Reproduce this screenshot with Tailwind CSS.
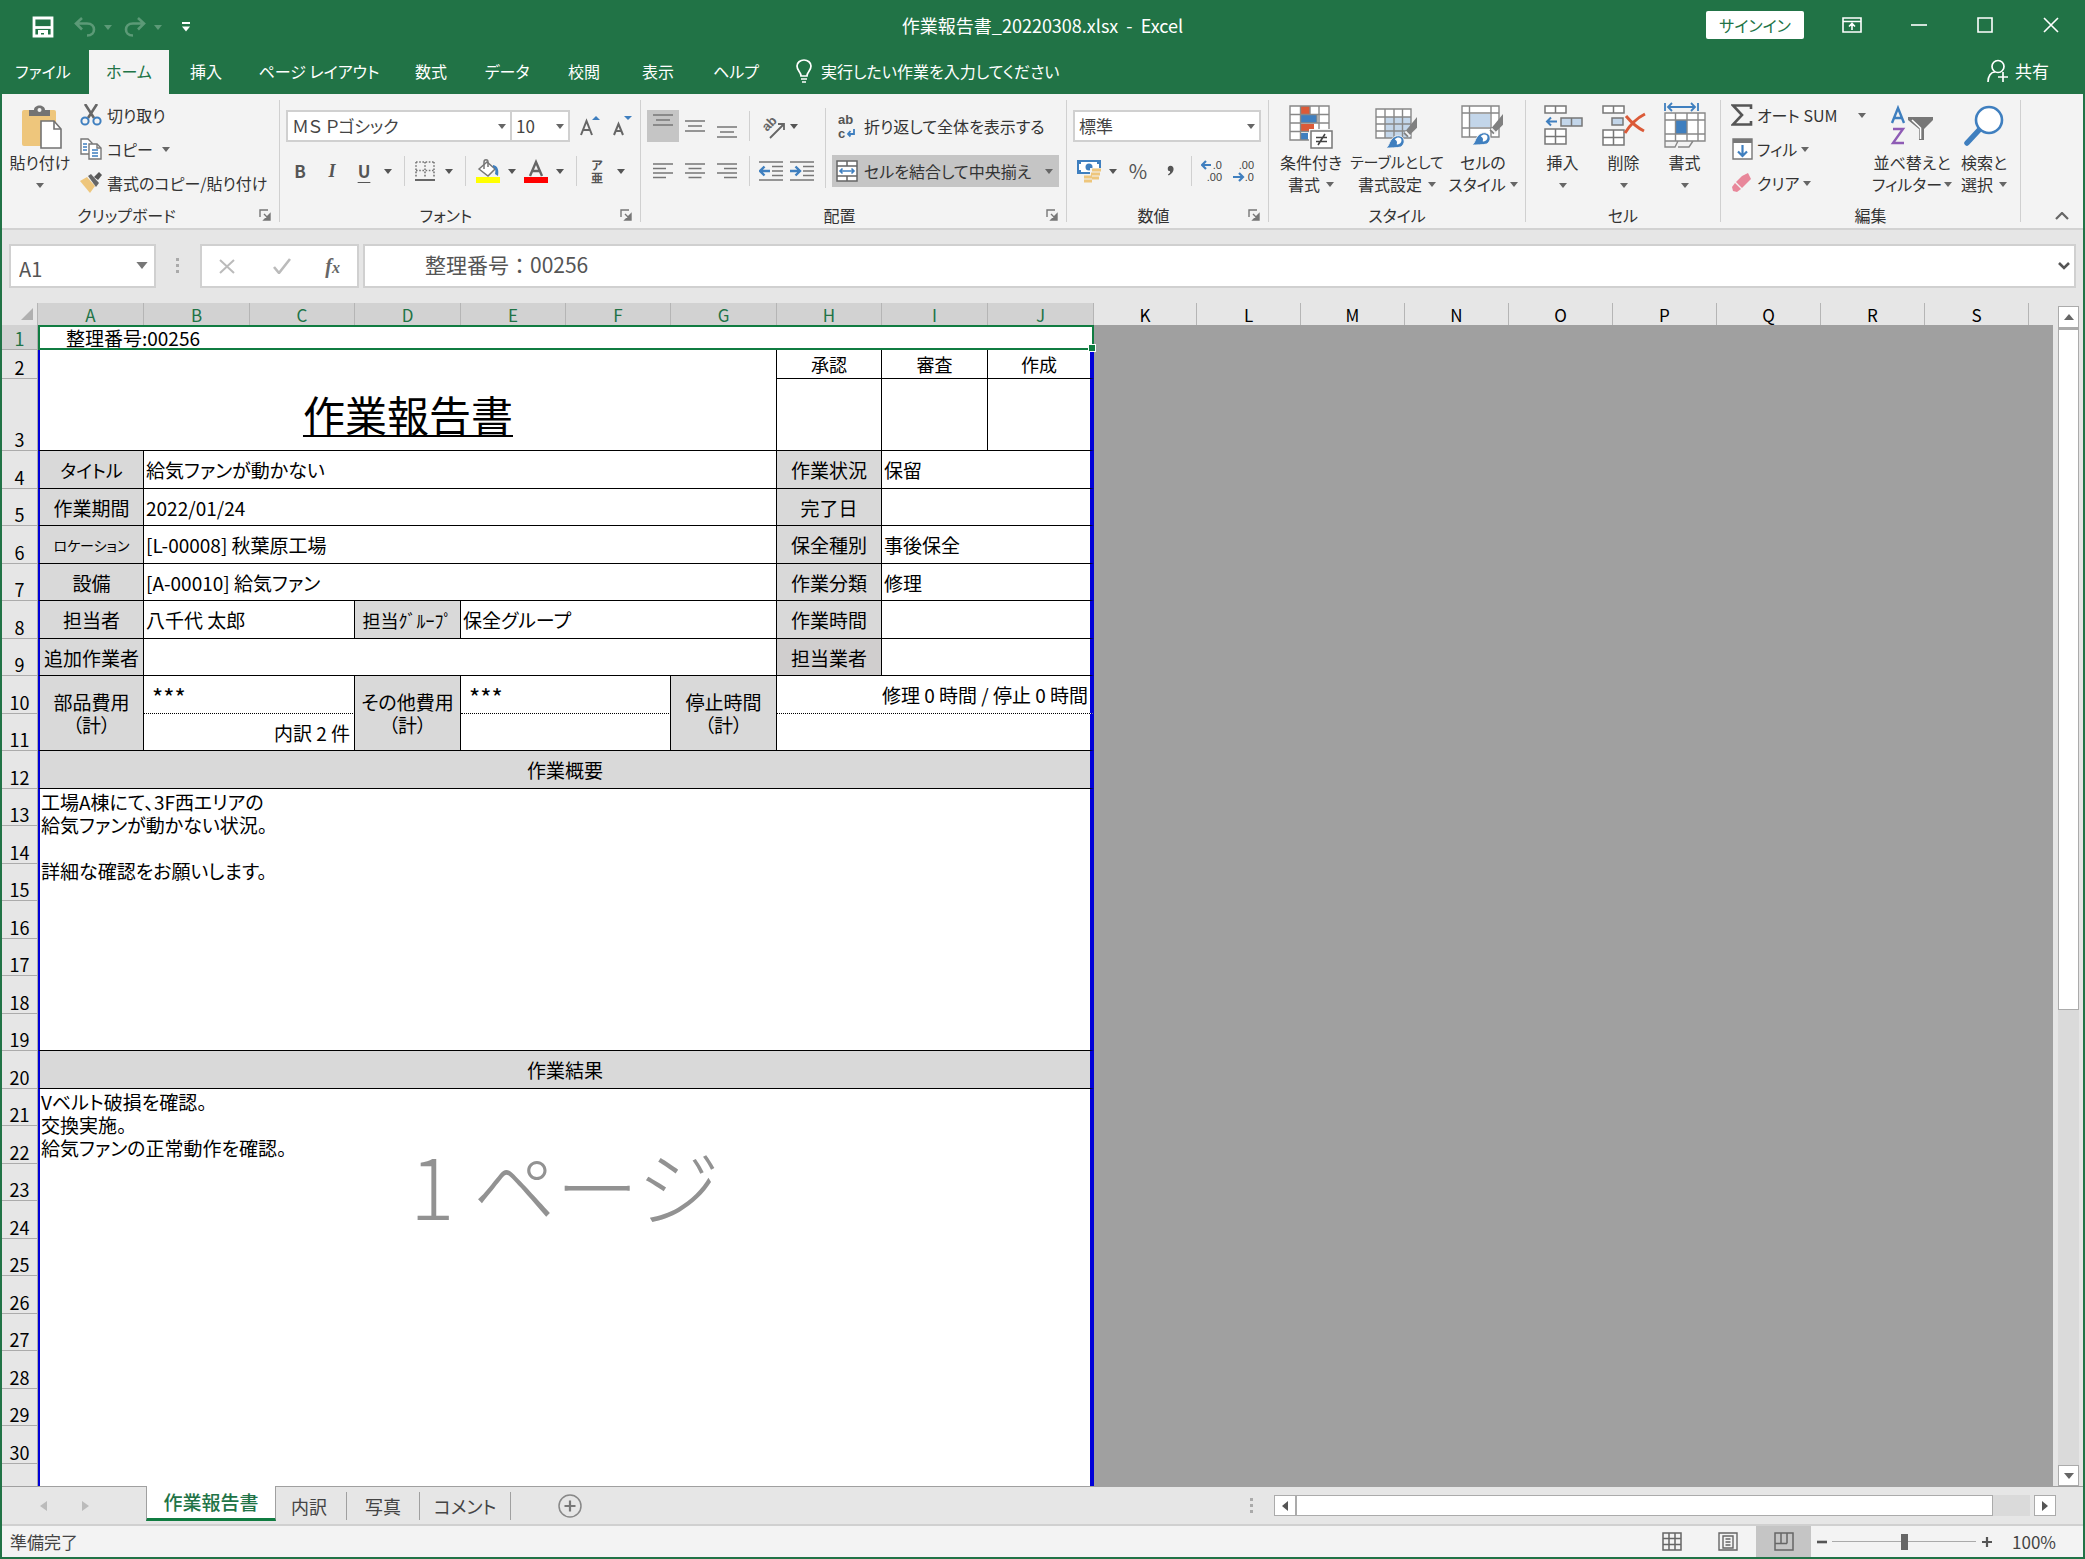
<!DOCTYPE html>
<html lang="ja">
<head>
  <meta charset="UTF-8">
  <title>作業報告書_20220308.xlsx - Excel</title>
  <!-- Tailwind for styling -->
  <script src="https://cdn.jsdelivr.net/npm/@tailwindcss/browser@4"></script>
</head>
<body class="h-screen flex flex-col overflow-hidden border-2 border-[#217346] bg-[#e6e6e6] font-['Noto_Sans_CJK_JP','Noto_Sans',sans-serif] [font-feature-settings:'palt'] text-base text-[#262626] whitespace-nowrap">

  <!-- Shared icons -->
  <svg class="hidden">
    <symbol id="dd" viewBox="0 0 8 5"><path d="M0 0h8L4 5z" fill="currentColor"/></symbol>
    <symbol id="launch" viewBox="0 0 12 12"><path d="M1 8V1h8" fill="none" stroke="#777" stroke-width="1.4"/><path d="M5 5l5 5M11 5v6H5z" stroke="#777" stroke-width="1.4" fill="#777"/></symbol>
    <symbol id="brush" viewBox="0 0 34 34"><path d="M33 1v11L23 22l-4-4z" fill="#808080"/><path d="M21 16l5 5" stroke="#f3f3f3" stroke-width="2"/><path d="M1 33c3-2 3-5 5-8 3-5 9-6 12-3s2 8-2 10c-4 1-10 1-15 1z" fill="#3f7fbf" stroke="#f3f3f3" stroke-width="1"/><path d="M10 24c3-3 7-2 7 1s-3 5-5 4c1-2 0-4-2-5z" fill="#fff"/></symbol>
  </svg>

  <!-- Title bar -->
  <header class="bg-[#217346] text-white shrink-0">
    <div class="flex h-12 items-center pb-0.5">
      <div class="flex flex-1 items-center pl-6 pt-1">
        <button class="ml-1.5" aria-label="上書き保存"><svg class="w-[22px] h-[22px]" viewBox="0 0 22 22"><path d="M2 2h18v18H2z" fill="none" stroke="#fff" stroke-width="2.800"/><path d="M2 11.500h18" stroke="#fff" stroke-width="2.800"/><path d="M6 20v-6h10v6h-4v-3H9v3z" fill="#fff"/></svg></button>
        <button class="ml-5 flex items-center gap-2 text-[#5c9a77]" aria-label="元に戻す"><svg class="w-[22px] h-5" viewBox="0 0 22 20"><path d="M8 1L2 6.500l6 6M2 6.500h11c5 0 7 3 7 6s-2 6-7 6" fill="none" stroke="currentColor" stroke-width="2.600"/></svg><svg class="w-2 h-[5px]"><use href="#dd"/></svg></button>
        <button class="ml-3 flex items-center gap-2 text-[#5c9a77]" aria-label="やり直し"><svg class="w-[22px] h-5" viewBox="0 0 22 20"><path d="M14 1l6 5.500-6 6M20 6.500H9c-5 0-7 3-7 6s2 6 7 6" fill="none" stroke="currentColor" stroke-width="2.600"/></svg><svg class="w-2 h-[5px]"><use href="#dd"/></svg></button>
        <button class="ml-5" aria-label="クイック アクセス ツール バーのユーザー設定"><svg class="w-2 h-[10px]" viewBox="0 0 8 10"><path d="M0 1h8" stroke="#fff" stroke-width="2"/><path d="M0 4.500h8L4 9.500z" fill="#fff"/></svg></button>
      </div>
      <h1 class="text-lg">作業報告書_20220308.xlsx&nbsp; -&nbsp; Excel</h1>
      <div class="flex flex-1 items-center justify-end pr-6">
        <button class="h-7 w-[98px] rounded-xs bg-white text-[#217346]">サインイン</button>
        <button class="ml-[38px]" aria-label="リボンの表示オプション"><svg class="w-5 h-4" viewBox="0 0 20 16"><path d="M1 1h18v14H1zM1 4.500h18M10 13V7M7 9.500l3-3 3 3" fill="none" stroke="#fff" stroke-width="1.600"/></svg></button>
        <button class="ml-[49px]" aria-label="最小化"><svg class="w-4 h-4" viewBox="0 0 16 16"><path d="M0 8h16" stroke="#fff" stroke-width="1.600"/></svg></button>
        <button class="ml-[50px]" aria-label="最大化"><svg class="w-4 h-4" viewBox="0 0 16 16"><path d="M1 1h14v14H1z" fill="none" stroke="#fff" stroke-width="1.600"/></svg></button>
        <button class="ml-[50px]" aria-label="閉じる"><svg class="w-4 h-4" viewBox="0 0 16 16"><path d="M1 1l14 14M15 1L1 15" stroke="#fff" stroke-width="1.600"/></svg></button>
      </div>
    </div>

    <!-- Ribbon tabs -->
    <nav class="flex h-11 [&>button]:pb-0.5">
      <button class="w-[82px]">ファイル</button>
      <button class="ml-[5px] w-20 bg-[#f3f3f3] text-[#217346]">ホーム</button>
      <button class="w-[74px]">挿入</button>
      <button class="w-[152px]">ページ レイアウト</button>
      <button class="w-[72px]">数式</button>
      <button class="w-20">データ</button>
      <button class="w-[74px]">校閲</button>
      <button class="w-[74px]">表示</button>
      <button class="w-[82px]">ヘルプ</button>
      <button class="ml-[18px] flex items-center gap-2"><svg class="w-[18px] h-6" viewBox="0 0 18 24"><path d="M6 17c0-4-4-5-4-10a7 6 0 0 1 14 0c0 5-4 6-4 10z" fill="none" stroke="#fff" stroke-width="1.700"/><path d="M6 20h6M7 23h4" stroke="#fff" stroke-width="1.700"/></svg>実行したい作業を入力してください</button>
      <button class="ml-auto mr-[34px] flex items-center gap-1.5 text-[17px]"><svg class="w-[22px] h-6" viewBox="0 0 22 24"><circle cx="11" cy="7.500" r="6" fill="none" stroke="#fff" stroke-width="1.700"/><path d="M1 23c0-6 3-10 7-10M16 13v10M11 18h10" fill="none" stroke="#fff" stroke-width="1.700"/></svg>共有</button>
    </nav>
  </header>

  <!-- Ribbon -->
  <section class="flex h-[136px] shrink-0 border-b-2 border-[#d2d2d2] bg-[#f3f3f3] leading-[22px] text-[#333]">

    <!-- Clipboard -->
    <div class="flex w-[277px] flex-col">
      <div class="flex h-[110px]">
        <button class="flex w-[76px] flex-col items-center pt-[11px]">
          <svg class="w-11 h-11" viewBox="0 0 44 44"><rect x="4" y="5" width="34" height="36" rx="2" fill="#eec67c"/><path d="M11 11V5h5c0-6 11-6 11 0h5v6z" fill="#737373"/><circle cx="21.500" cy="5" r="2" fill="#f3f3f3"/><path d="M23 16h13l7 8v19H23z" fill="#fff" stroke="#737373" stroke-width="1.600"/><path d="M36 16v8h7" fill="none" stroke="#737373" stroke-width="1.600"/></svg>
          <span class="mt-0.5">貼り付け</span>
          <svg class="mt-2.5 w-2 h-[5px] text-[#666]"><use href="#dd"/></svg>
        </button>
        <div class="flex flex-col pt-1 pl-0.5">
          <button class="flex h-[34px] items-center gap-[5px]"><svg class="w-[22px] h-[22px]" viewBox="0 0 22 22"><path d="M5 0l9 14M17 0L8 14" stroke="#666" stroke-width="2.600"/><circle cx="5" cy="17" r="3.600" fill="none" stroke="#3f7fbf" stroke-width="2"/><circle cx="17" cy="17" r="3.600" fill="none" stroke="#3f7fbf" stroke-width="2"/></svg>切り取り</button>
          <button class="flex h-[34px] items-center gap-[5px]"><svg class="w-[22px] h-[22px]" viewBox="0 0 22 22"><path d="M1 1h7l4 4v11H1z" fill="#fff" stroke="#777" stroke-width="1.400"/><path d="M3 6h4M3 9h4M3 12h4" stroke="#3f7fbf" stroke-width="1.400"/><path d="M9 6h8l4 4v11H9z" fill="#fff" stroke="#777" stroke-width="1.400"/><path d="M17 6v4h4" fill="none" stroke="#777" stroke-width="1.400"/><path d="M12 12h6M12 15h6M12 18h6" stroke="#3f7fbf" stroke-width="1.400"/></svg>コピー<svg class="ml-1 w-2 h-[5px] text-[#666]"><use href="#dd"/></svg></button>
          <button class="flex h-[34px] items-center gap-[5px]"><svg class="w-[22px] h-[22px]" viewBox="0 0 22 22"><path d="M0 9l7-4 8 9-5 7z" fill="#eec67c"/><path d="M8 4l3-2 8 9-3 4z" fill="#666"/><path d="M14 5l5-5 3 3-4 5z" fill="#555"/></svg>書式のコピー/貼り付け</button>
        </div>
      </div>
      <div class="flex items-center"><span class="flex-1 text-center">クリップボード</span><button class="flex w-7 justify-center" aria-label="クリップボードの設定"><svg class="w-3 h-3"><use href="#launch"/></svg></button></div>
    </div>
    <div class="my-1.5 w-px bg-[#d0d0d0]"></div>

    <!-- Font -->
    <div class="flex w-[360px] flex-col">
      <div class="flex h-[110px] flex-col gap-[13px] pt-4">
        <div class="flex h-8 items-center pl-1.5">
          <label class="relative"><select aria-label="フォント" class="h-8 w-[226px] appearance-none border-2 border-[#d0d0d0] bg-white pl-1 text-[17px] leading-6 text-[#444]"><option>ＭＳ Ｐゴシック</option></select><svg class="absolute right-1.5 top-3.5 w-2 h-[5px] text-[#666]"><use href="#dd"/></svg></label>
          <label class="relative"><select aria-label="フォント サイズ" class="h-8 w-[58px] appearance-none border-2 border-l-0 border-[#d0d0d0] bg-white pl-1 text-[17px] leading-6 text-[#444]"><option>10</option></select><svg class="absolute right-1.5 top-3.5 w-2 h-[5px] text-[#666]"><use href="#dd"/></svg></label>
          <button class="ml-1 flex w-8 justify-center" aria-label="フォント サイズの拡大"><svg class="w-5 h-5" viewBox="0 0 20 20"><path d="M1 19L6.500 5l5.500 14M3 14h7" fill="none" stroke="#666" stroke-width="2"/><path d="M12 4h8l-4-4z" fill="#3f7fbf"/></svg></button>
          <button class="flex w-8 justify-center" aria-label="フォント サイズの縮小"><svg class="w-5 h-5" viewBox="0 0 20 20"><path d="M2 19L6.500 8 11 19M4 15h5" fill="none" stroke="#666" stroke-width="2"/><path d="M12 0h8l-4 4z" fill="#3f7fbf"/></svg></button>
        </div>
        <div class="flex h-8 items-center pl-1 text-[#555]">
          <button class="w-8 text-[17px] font-bold">B</button>
          <button class="w-8 font-['Liberation_Serif',serif] text-lg font-bold italic">I</button>
          <button class="w-8 text-[17px] font-bold underline underline-offset-4">U</button>
          <button class="flex w-4 justify-center" aria-label="下線の種類"><svg class="w-2 h-[5px]"><use href="#dd"/></svg></button>
          <div class="ml-2 mr-1 h-[30px] w-px bg-[#d0d0d0]"></div>
          <button class="flex w-8 justify-center" aria-label="罫線"><svg class="w-5 h-5" viewBox="0 0 20 20"><path d="M1 1h18M1 9.500h18M1 1v16M10 1v16M19 1v16" fill="none" stroke="#777" stroke-width="1.600" stroke-dasharray="1.600 1.600"/><path d="M0 19h20" stroke="#666" stroke-width="2"/></svg></button>
          <button class="flex w-4 justify-center" aria-label="罫線の種類"><svg class="w-2 h-[5px]"><use href="#dd"/></svg></button>
          <div class="ml-2 mr-1 h-[30px] w-px bg-[#d0d0d0]"></div>
          <button class="flex w-9 justify-center" aria-label="塗りつぶしの色"><svg class="w-6 h-6" viewBox="0 0 24 24"><path d="M3 10l8-7 8 7-7 7z" fill="#fff" stroke="#777" stroke-width="1.500"/><path d="M8 10V3c0-3 4-3 4 0v5" fill="none" stroke="#777" stroke-width="1.500"/><path d="M17 6c5 1 6 5 5 11l-3-2c1-4 0-6-2-7z" fill="#3f7fbf"/><path d="M0 18h24v6H0z" fill="#ff0"/></svg></button>
          <button class="flex w-3 justify-center" aria-label="塗りつぶしの色の種類"><svg class="w-2 h-[5px]"><use href="#dd"/></svg></button>
          <button class="flex w-9 justify-center" aria-label="フォントの色"><svg class="w-6 h-6" viewBox="0 0 24 24"><path d="M6 17L12 3l6 14M8 12h8" fill="none" stroke="#666" stroke-width="2.400"/><path d="M0 18h24v6H0z" fill="#f00"/></svg></button>
          <button class="flex w-3 justify-center" aria-label="フォントの色の種類"><svg class="w-2 h-[5px]"><use href="#dd"/></svg></button>
          <div class="ml-2.5 mr-1 h-[30px] w-px bg-[#d0d0d0]"></div>
          <button class="flex w-8 flex-col items-center text-xs leading-[13px] font-bold" aria-label="ふりがなの表示"><span>ア</span><span>亜</span></button>
          <button class="flex w-4 justify-center" aria-label="ふりがなの設定"><svg class="w-2 h-[5px]"><use href="#dd"/></svg></button>
        </div>
      </div>
      <div class="flex items-center"><span class="flex-1 text-center">フォント</span><button class="flex w-7 justify-center" aria-label="フォントの設定"><svg class="w-3 h-3"><use href="#launch"/></svg></button></div>
    </div>
    <div class="my-1.5 w-px bg-[#d0d0d0]"></div>

    <!-- Alignment -->
    <div class="flex w-[425px] flex-col">
      <div class="flex h-[110px]">
        <div class="flex w-[184px] flex-col gap-[13px] pl-1.5 pt-4 text-[#555]">
          <div class="flex h-8 items-center">
            <button class="flex h-8 w-8 justify-center bg-[#c5c5c5] pt-1" aria-label="上揃え"><svg class="w-5 h-3" viewBox="0 0 20 12"><path d="M0 1h20M3 6h14M0 11h20" stroke="#777" stroke-width="1.600"/></svg></button>
            <button class="flex h-8 w-8 items-center justify-center" aria-label="上下中央揃え"><svg class="w-5 h-3" viewBox="0 0 20 12"><path d="M0 1h20M3 6h14M0 11h20" stroke="#777" stroke-width="1.600"/></svg></button>
            <button class="flex h-8 w-8 items-end justify-center pb-1" aria-label="下揃え"><svg class="w-5 h-3" viewBox="0 0 20 12"><path d="M0 1h20M3 6h14M0 11h20" stroke="#777" stroke-width="1.600"/></svg></button>
            <div class="mx-1.5 h-[30px] w-px bg-[#d0d0d0]"></div>
            <button class="flex w-[30px] justify-center" aria-label="方向"><svg class="w-7 h-7" viewBox="0 0 28 28"><text transform="translate(10 20) rotate(-45)" class="font-['Liberation_Sans',sans-serif] text-[13px] font-bold" fill="#666">ab</text><path d="M13 26L27 12M21 12h6v6" fill="none" stroke="#666" stroke-width="1.800"/></svg></button>
            <button class="flex w-4 justify-center" aria-label="方向の種類"><svg class="w-2 h-[5px]"><use href="#dd"/></svg></button>
          </div>
          <div class="flex h-8 items-center">
            <button class="flex w-8 justify-center" aria-label="左揃え"><svg class="w-5 h-4" viewBox="0 0 20 16"><path d="M0 1h20M0 5.500h13M0 10h20M0 14.500h13" stroke="#777" stroke-width="1.600"/></svg></button>
            <button class="flex w-8 justify-center" aria-label="中央揃え"><svg class="w-5 h-4" viewBox="0 0 20 16"><path d="M0 1h20M3.500 5.500h13M0 10h20M3.500 14.500h13" stroke="#777" stroke-width="1.600"/></svg></button>
            <button class="flex w-8 justify-center" aria-label="右揃え"><svg class="w-5 h-4" viewBox="0 0 20 16"><path d="M0 1h20M7 5.500h13M0 10h20M7 14.500h13" stroke="#777" stroke-width="1.600"/></svg></button>
            <div class="mx-1.5 h-[30px] w-px bg-[#d0d0d0]"></div>
            <button class="flex w-[30px] justify-center" aria-label="インデントを減らす"><svg class="w-6 h-5" viewBox="0 0 24 20"><path d="M0 1h24M13 5.500h11M13 10h11M13 14.500h11M0 19h24" stroke="#777" stroke-width="1.600"/><path d="M1 10h10M5.500 5.500L1 10l4.500 4.500" fill="none" stroke="#3f7fbf" stroke-width="2.400"/></svg></button>
            <button class="flex w-8 justify-center" aria-label="インデントを増やす"><svg class="w-6 h-5" viewBox="0 0 24 20"><path d="M0 1h24M13 5.500h11M13 10h11M13 14.500h11M0 19h24" stroke="#777" stroke-width="1.600"/><path d="M0 10h10M5.500 5.500L10 10l-4.500 4.500" fill="none" stroke="#3f7fbf" stroke-width="2.400"/></svg></button>
          </div>
        </div>
        <div class="mt-3.5 h-20 w-px bg-[#d0d0d0]"></div>
        <div class="flex flex-col gap-[13px] pl-1.5 pt-4">
          <button class="flex h-8 items-center gap-2 pl-1.5"><svg class="w-[18px] h-7" viewBox="0 0 18 28"><text x="0" y="12" class="font-['Liberation_Sans',sans-serif] text-[13px] font-bold" fill="#555">ab</text><text x="0" y="26" class="font-['Liberation_Sans',sans-serif] text-[13px] font-bold" fill="#555">c</text><path d="M16 17v5h-6M12.500 19L10 22l2.500 2.500" fill="none" stroke="#3f7fbf" stroke-width="1.800"/></svg>折り返して全体を表示する</button>
          <button class="flex h-8 w-[227px] items-center bg-[#c5c5c5] pl-1"><svg class="mr-1.5 w-[22px] h-[22px]" viewBox="0 0 22 22"><path d="M1 1h20v20H1zM1 6h20M1 16h20M11 1v5M11 16v5" fill="#fff" stroke="#666" stroke-width="1.500"/><path d="M4 11h14M6.500 8.500L4 11l2.500 2.500M15.500 8.500L18 11l-2.500 2.500" fill="none" stroke="#3f7fbf" stroke-width="1.600"/></svg>セルを結合して中央揃え<svg class="ml-auto mr-1.5 w-2 h-[5px] text-[#666]"><use href="#dd"/></svg></button>
        </div>
      </div>
      <div class="flex items-center"><span class="flex-1 text-center">配置</span><button class="flex w-7 justify-center" aria-label="配置の設定"><svg class="w-3 h-3"><use href="#launch"/></svg></button></div>
    </div>
    <div class="my-1.5 w-px bg-[#d0d0d0]"></div>

    <!-- Number -->
    <div class="flex w-[201px] flex-col">
      <div class="flex h-[110px] flex-col gap-[13px] pl-1.5 pt-4 text-[#555]">
        <label class="relative h-8 w-[188px]"><select aria-label="数値の書式" class="h-8 w-full appearance-none border-2 border-[#d0d0d0] bg-white pl-1 text-[17px] leading-6 text-[#444]"><option>標準</option></select><svg class="absolute right-1.5 top-3.5 w-2 h-[5px] text-[#666]"><use href="#dd"/></svg></label>
        <div class="flex h-8 items-center">
          <button class="flex w-8 justify-center" aria-label="通貨表示形式"><svg class="w-6 h-6" viewBox="0 0 24 24"><path d="M1 2h22v12H1z" fill="#fff" stroke="#3f7fbf" stroke-width="2"/><circle cx="12" cy="8" r="3.500" fill="#3f7fbf"/><path d="M1 2h3v3H1zM20 2h3v3h-3zM1 11h3v3H1z" fill="#3f7fbf"/><path d="M13 9h11v12H13z" fill="#f3f3f3"/><path d="M15 11h9M14 15h9M15 19h7M7 18h8M7 22h8" stroke="#eec67c" stroke-width="3"/></svg></button>
          <button class="flex w-4 justify-center" aria-label="通貨の種類"><svg class="w-2 h-[5px]"><use href="#dd"/></svg></button>
          <button class="w-[34px] text-xl">%</button>
          <button class="flex w-[30px] justify-center" aria-label="桁区切りスタイル"><svg class="w-[7px] h-3" viewBox="0 0 8 12"><path d="M4 0c5 0 5 8-2 11l-1-1c3-2 3-3 2-4C0 6 0 0 4 0z" fill="#555"/></svg></button>
          <div class="ml-1.5 mr-1 h-[30px] w-px bg-[#d0d0d0]"></div>
          <button class="flex w-8 justify-center" aria-label="小数点以下の表示桁数を増やす"><svg class="w-[22px] h-6" viewBox="0 0 22 24"><path d="M1 6h9M5 2L1 6l4 4" fill="none" stroke="#3f7fbf" stroke-width="2.200"/><text x="21" y="10" text-anchor="end" class="font-['Liberation_Sans',sans-serif] text-[11px]" fill="#444">.0</text><text x="21" y="22" text-anchor="end" class="font-['Liberation_Sans',sans-serif] text-[11px]" fill="#444">.00</text></svg></button>
          <button class="flex w-8 justify-center" aria-label="小数点以下の表示桁数を減らす"><svg class="w-[22px] h-6" viewBox="0 0 22 24"><path d="M0 18h10M6 14l4 4-4 4" fill="none" stroke="#3f7fbf" stroke-width="2.200"/><text x="21" y="10" text-anchor="end" class="font-['Liberation_Sans',sans-serif] text-[11px]" fill="#444">.00</text><text x="21" y="22" text-anchor="end" class="font-['Liberation_Sans',sans-serif] text-[11px]" fill="#444">.0</text></svg></button>
        </div>
      </div>
      <div class="flex items-center"><span class="flex-1 text-center">数値</span><button class="flex w-7 justify-center" aria-label="表示形式の設定"><svg class="w-3 h-3"><use href="#launch"/></svg></button></div>
    </div>
    <div class="my-1.5 w-px bg-[#d0d0d0]"></div>

    <!-- Styles -->
    <div class="flex w-[256px] flex-col">
      <div class="flex h-[110px] pl-0.5">
        <button class="flex w-20 flex-col items-center pt-[11px]">
          <svg class="w-11 h-11" viewBox="0 0 44 44"><path d="M1 1h39v34H1z" fill="#fff"/><path d="M12 1h9v8h-9zM12 19h13v8H12z" fill="#db5a38"/><path d="M12 10h16v8H12zM12 28h7v7h-7z" fill="#3f7fbf"/><path d="M1 1h39v34H1zM1 9.500h39M1 18h39M1 26.500h39M11.500 1v34M30 1v34M21 1v8M28 10v8" fill="none" stroke="#888" stroke-width="1.400"/><path d="M20 24h24v20H20z" fill="#f3f3f3"/><path d="M22 26h21v17H22z" fill="#fff" stroke="#777" stroke-width="1.500"/><path d="M27 32.500h11M27 36.500h11M36 29l-7 11" stroke="#444" stroke-width="1.600"/></svg>
          <span class="mt-0.5">条件付き</span>
          <span class="flex items-center gap-1.5">書式<svg class="w-2 h-[5px] text-[#666]"><use href="#dd"/></svg></span>
        </button>
        <button class="flex w-[92px] flex-col items-center pt-[11px]">
          <svg class="w-11 h-11" viewBox="0 0 44 44"><path d="M1 4h35v29H1z" fill="#fff"/><path d="M10 12h26v21H10z" fill="#c3d6ea"/><path d="M1 4h35v29H1zM1 12h35M1 19h35M1 26h35M10 4v29M19 4v29M27.500 4v29" fill="none" stroke="#888" stroke-width="1.400"/><use href="#brush" x="10" y="11" width="33" height="33"/></svg>
          <span class="mt-0.5 text-[15px]">テーブルとして</span>
          <span class="flex items-center gap-1.5">書式設定<svg class="w-2 h-[5px] text-[#666]"><use href="#dd"/></svg></span>
        </button>
        <button class="flex w-20 flex-col items-center pt-[11px]">
          <svg class="w-11 h-11" viewBox="0 0 44 44"><path d="M1 1h37v31H1z" fill="#fff"/><path d="M9 9h20v13H9z" fill="#c3d6ea"/><path d="M1 1h37v31H1zM1 8h37M1 23h37M8.500 1v31M30 1v31" fill="none" stroke="#888" stroke-width="1.400"/><use href="#brush" x="10" y="8" width="33" height="33"/></svg>
          <span class="mt-0.5">セルの</span>
          <span class="flex items-center gap-1">スタイル<svg class="w-2 h-[5px] text-[#666]"><use href="#dd"/></svg></span>
        </button>
      </div>
      <div class="text-center">スタイル</div>
    </div>
    <div class="my-1.5 w-px bg-[#d0d0d0]"></div>

    <!-- Cells -->
    <div class="flex w-[194px] flex-col">
      <div class="flex h-[110px] pl-1.5">
        <button class="flex w-[61px] flex-col items-center pt-[11px]">
          <svg class="w-10 h-11" viewBox="0 0 40 44"><path d="M2 1h21v7H2zM12.500 1v7M2 24h21v15H2zM2 31.500h21M12.500 24v15" fill="#fff" stroke="#777" stroke-width="1.500"/><path d="M18 13h21v8H18zM28.500 13v8" fill="#c3d6ea" stroke="#777" stroke-width="1.500"/><path d="M4 16.500h10M8 12.500l-4 4 4 4" fill="none" stroke="#3f7fbf" stroke-width="2"/></svg>
          <span class="mt-0.5">挿入</span>
          <svg class="mt-2.5 w-2 h-[5px] text-[#666]"><use href="#dd"/></svg>
        </button>
        <button class="flex w-[61px] flex-col items-center pt-[11px]">
          <svg class="w-11 h-11" viewBox="0 0 44 44"><path d="M1 1h21v7H1zM11.500 1v7M1 25h21v15H1zM1 32.500h21M11.500 25v15" fill="#fff" stroke="#777" stroke-width="1.500"/><path d="M10 13h11v7H10z" fill="#c3d6ea" stroke="#777" stroke-width="1.500"/><path d="M24 11c5 6 12 12 18 15M43 9c-8 4-15 11-20 19" fill="none" stroke="#db5a38" stroke-width="3"/></svg>
          <span class="mt-0.5">削除</span>
          <svg class="mt-2.5 w-2 h-[5px] text-[#666]"><use href="#dd"/></svg>
        </button>
        <button class="flex w-[61px] flex-col items-center pt-2">
          <svg class="w-[42px] h-[47px]" viewBox="0 0 42 47"><path d="M1 1v8M34 1v8M4 5h27M8 1L4 5l4 4M27 1l4 4-4 4" fill="none" stroke="#3f7fbf" stroke-width="1.800"/><path d="M1 11h40v28H1z" fill="#fff"/><path d="M12 18h11v14H12z" fill="#3f7fbf"/><path d="M1 11h40v28H1zM1 18h40M1 32h40M11.500 11v28M23 11v28M34 11v28M1 39v6h10l3-6M14 45h11l4-6" fill="none" stroke="#888" stroke-width="1.400"/></svg>
          <span class="mt-0.5">書式</span>
          <svg class="mt-2.5 w-2 h-[5px] text-[#666]"><use href="#dd"/></svg>
        </button>
      </div>
      <div class="text-center">セル</div>
    </div>
    <div class="my-1.5 w-px bg-[#d0d0d0]"></div>

    <!-- Editing -->
    <div class="flex w-[299px] flex-col">
      <div class="flex h-[110px] pl-2.5">
        <div class="flex w-[141px] flex-col pt-1">
          <button class="flex h-[34px] items-center gap-1"><svg class="w-[22px] h-[22px]" viewBox="0 0 22 22"><path d="M20 5V1.500H2L11 11l-9 9.500h18V17" fill="none" stroke="#555" stroke-width="2.600"/></svg>オート SUM<svg class="ml-auto mr-1.5 w-2 h-[5px] text-[#666]"><use href="#dd"/></svg></button>
          <button class="flex h-[34px] items-center gap-1"><svg class="w-[22px] h-[22px]" viewBox="0 0 22 22"><path d="M2 1h19v20H2z" fill="#fff" stroke="#777" stroke-width="1.400"/><path d="M2 1h19v4H2z" fill="#777"/><path d="M11.500 7v11M7 13.500l4.500 4.500 4.500-4.500" fill="none" stroke="#3f7fbf" stroke-width="2.200"/></svg>フィル<svg class="w-2 h-[5px] text-[#666]"><use href="#dd"/></svg></button>
          <button class="flex h-[34px] items-center gap-1"><svg class="w-[22px] h-[22px]" viewBox="0 0 22 22"><path d="M11 4l6-3 3 6-9 9-6-6z" fill="#e8879a"/><path d="M4 11l6 6-4 3-4-1-1-4z" fill="#e8879a"/></svg>クリア<svg class="w-2 h-[5px] text-[#666]"><use href="#dd"/></svg></button>
        </div>
        <button class="flex w-20 flex-col items-center pt-[11px]">
          <svg class="w-11 h-11" viewBox="0 0 44 44"><path d="M2 18L8 3l6 15M4 13h8" fill="none" stroke="#3f7fbf" stroke-width="2.400"/><path d="M3 24h10L3 38h11" fill="none" stroke="#8e5bb5" stroke-width="2.400"/><path d="M18 12h25v3l-9 9v11h-5V24l-11-9z" fill="#777"/><path d="M22 15l8.500 8v11" fill="none" stroke="#fff" stroke-width="1.600"/></svg>
          <span class="mt-0.5">並べ替えと</span>
          <span class="flex items-center gap-0.5">フィルター<svg class="w-2 h-[5px] text-[#666]"><use href="#dd"/></svg></span>
        </button>
        <button class="flex w-16 flex-col items-center pt-[11px]">
          <svg class="w-10 h-11" viewBox="0 0 40 44"><path d="M16 24L3 38" stroke="#3f7fbf" stroke-width="5.500" stroke-linecap="round"/><circle cx="25" cy="15" r="13" fill="#fff" stroke="#3f7fbf" stroke-width="2.600"/></svg>
          <span class="mt-0.5">検索と</span>
          <span class="flex items-center gap-1.5">選択<svg class="w-2 h-[5px] text-[#666]"><use href="#dd"/></svg></span>
        </button>
      </div>
      <div class="text-center">編集</div>
    </div>
    <div class="my-1.5 w-px bg-[#d0d0d0]"></div>
    <button class="ml-auto mr-3.5 self-end pb-2" aria-label="リボンを折りたたむ"><svg class="w-3.5 h-2" viewBox="0 0 14 8"><path d="M1 7l6-6 6 6" fill="none" stroke="#666" stroke-width="2.200"/></svg></button>
  </section>

  <!-- Formula bar -->
  <section class="flex h-[73px] shrink-0 pl-[7px] pr-[7px] pt-3.5 text-[#555]">
    <label class="relative h-11">
      <input aria-label="名前ボックス" value="A1" class="h-11 w-[147px] border-2 border-[#d0d0d0] bg-white pl-2 pt-1 text-xl">
      <svg class="absolute right-2 top-[18px] h-[7px] w-3 text-[#777]"><use href="#dd"/></svg>
    </label>
    <svg class="mx-5 mt-3.5 h-4 w-1" viewBox="0 0 4 16"><path d="M0 0h3v3H0zM0 6h3v3H0zM0 12h3v3H0z" fill="#aaa"/></svg>
    <div class="flex h-11 w-[159px] items-center justify-between border-2 border-[#d0d0d0] bg-white px-[17px]">
      <button aria-label="キャンセル"><svg class="w-4 h-4" viewBox="0 0 16 16"><path d="M1 2l14 13M15 2L1 15" stroke="#bbb" stroke-width="2"/></svg></button>
      <button class="ml-1" aria-label="入力"><svg class="w-[18px] h-4" viewBox="0 0 18 16"><path d="M1 9l5 6L17 1" fill="none" stroke="#bbb" stroke-width="2.600"/></svg></button>
      <button aria-label="関数の挿入" class="font-['Liberation_Serif',serif] text-xl font-bold italic text-[#666]">f<span class="text-base">x</span></button>
    </div>
    <label class="relative ml-1 h-11 flex-1">
      <input aria-label="数式バー" value="整理番号：00256" class="h-11 w-full border-2 border-[#d0d0d0] bg-white pl-[60px] pb-1 text-[21px] [font-feature-settings:normal]">
      <svg class="absolute right-1.5 top-[18px] h-2 w-3" viewBox="0 0 12 8"><path d="M1 1l5 5 5-5" fill="none" stroke="#555" stroke-width="2.600"/></svg>
    </label>
  </section>

  <!-- Sheet -->
  <main class="flex min-h-0 flex-1">
    <div class="flex-1 overflow-hidden">
      <table class="w-full table-fixed border-separate border-spacing-0 text-[19px] leading-[23px] text-black">
        <colgroup>
          <col class="w-9">
          <col class="w-[106px]"><col class="w-[106px]"><col class="w-[105px]"><col class="w-[106px]"><col class="w-[105px]">
          <col class="w-[105px]"><col class="w-[106px]"><col class="w-[105px]"><col class="w-[106px]"><col class="w-[106px]">
          <col class="w-[103px]"><col class="w-[104px]"><col class="w-[104px]"><col class="w-[104px]"><col class="w-[104px]">
          <col class="w-[104px]"><col class="w-[104px]"><col class="w-[104px]"><col class="w-[104px]"><col>
        </colgroup>
        <thead class="text-[17px] leading-[21px] [&_th]:font-normal [&_th]:border-r [&_th]:border-[#b5b5b5]">
          <tr class="h-[22px]">
            <th aria-label="すべて選択"><svg class="ml-auto mr-1 h-3 w-3" viewBox="0 0 12 12"><path d="M12 0v12H0z" fill="#b0b0b0"/></svg></th>
            <th class="bg-[#d2d2d2] text-[#217346]">A</th><th class="bg-[#d2d2d2] text-[#217346]">B</th><th class="bg-[#d2d2d2] text-[#217346]">C</th><th class="bg-[#d2d2d2] text-[#217346]">D</th><th class="bg-[#d2d2d2] text-[#217346]">E</th>
            <th class="bg-[#d2d2d2] text-[#217346]">F</th><th class="bg-[#d2d2d2] text-[#217346]">G</th><th class="bg-[#d2d2d2] text-[#217346]">H</th><th class="bg-[#d2d2d2] text-[#217346]">I</th><th class="bg-[#d2d2d2] text-[#217346]">J</th>
            <th>K</th><th>L</th><th>M</th><th>N</th><th>O</th><th>P</th><th>Q</th><th>R</th><th>S</th><td></td>
          </tr>
        </thead>
        <tbody class="[&_th]:border-b [&_th]:border-r [&_th]:border-[#ababab] [&_th]:align-bottom [&_th]:text-lg [&_th]:leading-[22px] [&_th]:font-normal [&_td]:border-black">
          <tr class="h-[25px]">
            <th class="bg-[#d2d2d2] text-[#217346]">1</th>
            <td colspan="10" class="relative border-2 border-[#107c41]! bg-white pl-[26px] leading-5">整理番号:00256<span class="absolute -bottom-1 -right-1 h-2 w-2 border border-white bg-[#107c41]"></span></td>
            <td colspan="10" rowspan="31" class="bg-[#a0a0a0]"></td>
          </tr>
          <tr class="h-[29px]">
            <th>2</th>
            <td colspan="7" rowspan="2" class="border-b border-r border-l-2 border-l-[#0000d8]! bg-white pb-[11px] text-center align-bottom text-[42px] leading-[50px] underline decoration-2 underline-offset-3">作業報告書</td>
            <td class="border-b border-r bg-white text-center text-lg">承認</td>
            <td class="border-b border-r bg-white text-center text-lg">審査</td>
            <td class="border-b border-r-4 border-r-[#0000d8]! bg-white text-center text-lg">作成</td>
          </tr>
          <tr class="h-[72px]">
            <th>3</th>
            <td class="border-b border-r bg-white"></td>
            <td class="border-b border-r bg-white"></td>
            <td class="border-b border-r-4 border-r-[#0000d8]! bg-white"></td>
          </tr>
          <tr class="h-[38px]">
            <th>4</th>
            <td class="border-b border-r border-l-2 border-l-[#0000d8]! bg-[#d9d9d9] text-center text-lg">タイトル</td>
            <td colspan="6" class="border-b border-r bg-white px-0.5">給気ファンが動かない</td>
            <td class="border-b border-r bg-[#d9d9d9] text-center">作業状況</td>
            <td colspan="2" class="border-b border-r-4 border-r-[#0000d8]! bg-white px-0.5">保留</td>
          </tr>
          <tr class="h-[37px]">
            <th>5</th>
            <td class="border-b border-r border-l-2 border-l-[#0000d8]! bg-[#d9d9d9] text-center">作業期間</td>
            <td colspan="6" class="border-b border-r bg-white px-0.5">2022/01/24</td>
            <td class="border-b border-r bg-[#d9d9d9] text-center">完了日</td>
            <td colspan="2" class="border-b border-r-4 border-r-[#0000d8]! bg-white px-0.5"></td>
          </tr>
          <tr class="h-[38px]">
            <th>6</th>
            <td class="border-b border-r border-l-2 border-l-[#0000d8]! bg-[#d9d9d9] text-center text-sm">ロケーション</td>
            <td colspan="6" class="border-b border-r bg-white px-0.5">[L-00008] 秋葉原工場</td>
            <td class="border-b border-r bg-[#d9d9d9] text-center">保全種別</td>
            <td colspan="2" class="border-b border-r-4 border-r-[#0000d8]! bg-white px-0.5">事後保全</td>
          </tr>
          <tr class="h-[37px]">
            <th>7</th>
            <td class="border-b border-r border-l-2 border-l-[#0000d8]! bg-[#d9d9d9] text-center">設備</td>
            <td colspan="6" class="border-b border-r bg-white px-0.5">[A-00010] 給気ファン</td>
            <td class="border-b border-r bg-[#d9d9d9] text-center">作業分類</td>
            <td colspan="2" class="border-b border-r-4 border-r-[#0000d8]! bg-white px-0.5">修理</td>
          </tr>
          <tr class="h-[38px]">
            <th>8</th>
            <td class="border-b border-r border-l-2 border-l-[#0000d8]! bg-[#d9d9d9] text-center">担当者</td>
            <td colspan="2" class="border-b border-r bg-white px-0.5">八千代 太郎</td>
            <td class="border-b border-r bg-[#d9d9d9] text-center text-lg">担当ｸﾞﾙｰﾌﾟ</td>
            <td colspan="3" class="border-b border-r bg-white px-0.5">保全グループ</td>
            <td class="border-b border-r bg-[#d9d9d9] text-center">作業時間</td>
            <td colspan="2" class="border-b border-r-4 border-r-[#0000d8]! bg-white px-0.5"></td>
          </tr>
          <tr class="h-[37px]">
            <th>9</th>
            <td class="border-b border-r border-l-2 border-l-[#0000d8]! bg-[#d9d9d9] text-center">追加作業者</td>
            <td colspan="6" class="border-b border-r bg-white px-0.5"></td>
            <td class="border-b border-r bg-[#d0cece] text-center">担当業者</td>
            <td colspan="2" class="border-b border-r-4 border-r-[#0000d8]! bg-white px-0.5"></td>
          </tr>
          <tr class="h-[38px]">
            <th>10</th>
            <td rowspan="2" class="border-b border-r border-l-2 border-l-[#0000d8]! bg-[#d9d9d9] text-center">部品費用<br>（計）</td>
            <td colspan="2" class="border-r border-b [border-bottom-style:dotted] bg-white px-2 pt-1 text-2xl leading-6">***</td>
            <td rowspan="2" class="border-b border-r bg-[#d9d9d9] text-center">その他費用<br>（計）</td>
            <td colspan="2" class="border-r border-b [border-bottom-style:dotted] bg-white px-2 pt-1 text-2xl leading-6">***</td>
            <td rowspan="2" class="border-b border-r bg-[#d9d9d9] text-center">停止時間<br>（計）</td>
            <td colspan="3" class="border-r-4 border-r-[#0000d8]! border-b [border-bottom-style:dotted] bg-white px-0.5 text-right">修理 0 時間 / 停止 0 時間</td>
          </tr>
          <tr class="h-[37px]">
            <th>11</th>
            <td colspan="2" class="border-b border-r bg-white px-1 text-right">内訳 2 件</td>
            <td colspan="2" class="border-b border-r bg-white"></td>
            <td colspan="3" class="border-b border-r-4 border-r-[#0000d8]! bg-white"></td>
          </tr>
          <tr class="h-[38px]">
            <th>12</th>
            <td colspan="10" class="border-b border-l-2 border-l-[#0000d8]! border-r-4 border-r-[#0000d8]! bg-[#d9d9d9] text-center">作業概要</td>
          </tr>
          <tr class="h-[37px]">
            <th>13</th>
            <td colspan="10" rowspan="7" class="border-b border-l-2 border-l-[#0000d8]! border-r-4 border-r-[#0000d8]! bg-white pl-px pt-px align-top">工場A棟にて、3F西エリアの<br>給気ファンが動かない状況。<br><br>詳細な確認をお願いします。</td>
          </tr>
          <tr class="h-[38px]"><th>14</th></tr>
          <tr class="h-[37px]"><th>15</th></tr>
          <tr class="h-[38px]"><th>16</th></tr>
          <tr class="h-[37px]"><th>17</th></tr>
          <tr class="h-[38px]"><th>18</th></tr>
          <tr class="h-[37px]"><th>19</th></tr>
          <tr class="h-[38px]">
            <th>20</th>
            <td colspan="10" class="border-b border-l-2 border-l-[#0000d8]! border-r-4 border-r-[#0000d8]! bg-[#d9d9d9] text-center">作業結果</td>
          </tr>
          <tr class="h-[37px]">
            <th>21</th>
            <td colspan="10" rowspan="11" class="relative border-l-2 border-l-[#0000d8]! border-r-4 border-r-[#0000d8]! bg-white pl-px pt-px align-top">Vベルト破損を確認。<br>交換実施。<br>給気ファンの正常動作を確認。
              <!-- Page number watermark -->
              <div class="absolute inset-x-0 top-[47px] text-center text-[83px] leading-[96px] font-light text-[#929292] [font-feature-settings:normal]">1 ページ</div>
            </td>
          </tr>
          <tr class="h-[38px]"><th>22</th></tr>
          <tr class="h-[37px]"><th>23</th></tr>
          <tr class="h-[38px]"><th>24</th></tr>
          <tr class="h-[37px]"><th>25</th></tr>
          <tr class="h-[38px]"><th>26</th></tr>
          <tr class="h-[37px]"><th>27</th></tr>
          <tr class="h-[38px]"><th>28</th></tr>
          <tr class="h-[37px]"><th>29</th></tr>
          <tr class="h-[38px]"><th>30</th></tr>
          <tr class="h-12"><th>31</th></tr>
        </tbody>
      </table>
    </div>

    <!-- Vertical scrollbar -->
    <div class="flex w-[30px] flex-col pl-[5px] pr-1 pt-[3px]">
      <button class="flex h-[22px] shrink-0 items-center justify-center border border-[#ababab] bg-white text-[#666]" aria-label="上へ"><svg class="h-1.5 w-2.5" viewBox="0 0 10 6"><path d="M5 0l5 6H0z" fill="currentColor"/></svg></button>
      <div class="flex-1 bg-[#dadada]"><div class="h-3/5 border border-t-2 border-[#ababab] bg-white"></div></div>
      <button class="flex h-[21px] shrink-0 items-center justify-center border border-[#ababab] bg-white text-[#666]" aria-label="下へ"><svg class="h-1.5 w-2.5" viewBox="0 0 10 6"><path d="M0 0h10L5 6z" fill="currentColor"/></svg></button>
    </div>
  </main>

  <!-- Sheet tabs -->
  <nav class="flex h-10 shrink-0 border-b-2 border-[#d0d0d0] text-lg text-[#444]">
    <div class="flex w-36 items-center gap-[35px] border-t border-[#a0a0a0] pl-[38px]">
      <button aria-label="前のシート"><svg class="h-2.5 w-[7px]" viewBox="0 0 7 10"><path d="M7 0v10L0 5z" fill="#bbb"/></svg></button>
      <button aria-label="次のシート"><svg class="h-2.5 w-[7px]" viewBox="0 0 7 10"><path d="M0 0v10l7-5z" fill="#bbb"/></svg></button>
    </div>
    <button class="h-[35px] w-[130px] border-b-3 border-x border-x-[#a0a0a0] border-b-[#107c41] bg-white text-[19px] font-medium text-[#217346]">作業報告書</button>
    <div class="flex flex-1 items-center border-t border-[#a0a0a0]">
      <button class="h-7 w-[71px] border-r border-[#a0a0a0] pr-1 leading-6">内訳</button>
      <button class="h-7 w-[73px] border-r border-[#a0a0a0] leading-6">写真</button>
      <button class="h-7 w-[91px] border-r border-[#a0a0a0] leading-6">コメント</button>
      <button class="ml-[47px]" aria-label="新しいシート"><svg class="h-6 w-6" viewBox="0 0 24 24"><circle cx="12" cy="12" r="11" fill="none" stroke="#888" stroke-width="1.500"/><path d="M12 6.500v11M6.500 12h11" stroke="#777" stroke-width="2.200"/></svg></button>
      <svg class="ml-auto mr-5 h-4 w-1" viewBox="0 0 4 16"><path d="M0 0h3v3H0zM0 6h3v3H0zM0 12h3v3H0z" fill="#aaa"/></svg>
    </div>
    <div class="flex w-[809px] items-center border-t border-[#a0a0a0] pr-[27px]">
      <button class="flex h-[21px] w-[22px] items-center justify-center border border-[#ababab] bg-white" aria-label="左へ"><svg class="h-2.5 w-1.5" viewBox="0 0 6 10"><path d="M6 0v10L0 5z" fill="#555"/></svg></button>
      <div class="h-[21px] flex-1 bg-[#dadada]"><div class="h-full w-[95%] border border-[#ababab] bg-white"></div></div>
      <button class="ml-1 flex h-[21px] w-[22px] items-center justify-center border border-[#ababab] bg-white" aria-label="右へ"><svg class="h-2.5 w-1.5" viewBox="0 0 6 10"><path d="M0 0v10l6-5z" fill="#555"/></svg></button>
    </div>
  </nav>

  <!-- Status bar -->
  <footer class="flex h-[31px] shrink-0 items-center bg-[#f3f3f3] pl-2 pr-[27px] text-[17px] text-[#444]">
    <span>準備完了</span>
    <button class="ml-auto flex h-full w-14 items-center justify-center" aria-label="標準"><svg class="h-[19px] w-5" viewBox="0 0 20 19"><path d="M1 1h18v17H1zM1 6.500h18M1 12.500h18M7 1v17M13 1v17" fill="none" stroke="#666" stroke-width="1.500"/></svg></button>
    <button class="flex h-full w-14 items-center justify-center" aria-label="ページ レイアウト"><svg class="h-[19px] w-5" viewBox="0 0 20 19"><path d="M1 1h18v17H1zM5 4h10v12H5zM7.500 7h5M7.500 10h5M7.500 13h5" fill="none" stroke="#666" stroke-width="1.400"/></svg></button>
    <button class="flex h-full w-[55px] items-center justify-center bg-[#c5c5c5]" aria-label="改ページ プレビュー"><svg class="h-[19px] w-5" viewBox="0 0 20 19"><path d="M1 1h18v17H1zM1 11.500h12M13 1v10.500M7 1v10.500" fill="none" stroke="#666" stroke-width="1.500"/></svg></button>
    <button class="w-[21px]" aria-label="縮小"><svg class="mx-auto h-3 w-2.5" viewBox="0 0 10 12"><path d="M0 6h10" stroke="#555" stroke-width="2.600"/></svg></button>
    <input type="range" aria-label="ズーム" min="0" max="100" value="50" class="h-4 w-[144px] appearance-none bg-transparent [&::-webkit-slider-runnable-track]:h-4 [&::-webkit-slider-runnable-track]:bg-[linear-gradient(#aaa,#aaa)] [&::-webkit-slider-runnable-track]:bg-[length:100%_1px] [&::-webkit-slider-runnable-track]:bg-center [&::-webkit-slider-runnable-track]:bg-no-repeat [&::-webkit-slider-thumb]:h-4 [&::-webkit-slider-thumb]:w-[7px] [&::-webkit-slider-thumb]:appearance-none [&::-webkit-slider-thumb]:bg-[#666]">
    <button class="w-[21px]" aria-label="拡大"><svg class="mx-auto h-3 w-2.5" viewBox="0 0 10 12"><path d="M0 6h10M5 1v10" stroke="#555" stroke-width="2.200"/></svg></button>
    <span class="w-[59px] text-right">100%</span>
  </footer>
</body>
</html>
